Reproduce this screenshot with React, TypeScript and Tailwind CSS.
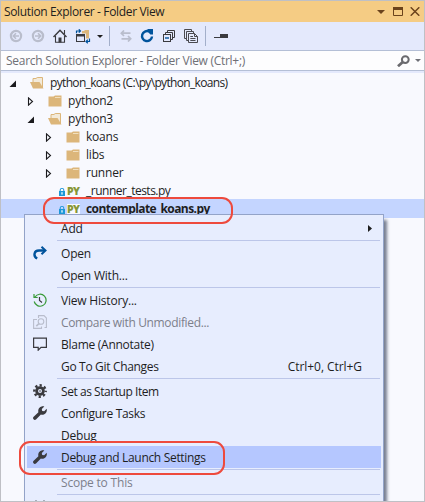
import type { ReactNode } from 'react';

const Back = ({ flip = false }: { flip?: boolean }) => (
  <svg viewBox="0 0 14 14" className={flip ? 'size-[14px] -scale-x-100' : 'size-[14px]'}>
    <circle cx="7" cy="7" r="5.1" fill="none" stroke="#b9bdcc" strokeWidth="2.2" />
    <path d="M10 7H4.5M7 4.3L4.3 7L7 9.7" fill="none" stroke="#b9bdcc" strokeWidth="1.6" />
  </svg>
);

const Home = () => (
  <svg viewBox="0 0 14 14" className="size-[14px]" fill="none" stroke="#3a3a3f">
    <path d="M0.5 8L7 1.3L13.5 8" strokeWidth="1.5" />
    <path d="M2.5 7V13.3H11.5V7M11.5 1V5" strokeWidth="1.1" />
    <path d="M5.5 13.5V8.5H8.5V13.5Z" fill="#3a3a3f" stroke="none" />
  </svg>
);

const SyncView = () => (
  <svg viewBox="0 0 16 15" className="h-[15px] w-4">
    <path d="M7 2H9L10 1H14V9.5H7Z" fill="#dcb67a" />
    <rect x="0" y="4.5" width="11" height="9.5" fill="#e4e9fc" />
    <rect x="1.5" y="5.5" width="8" height="7" fill="#e4e9fc" stroke="#3a3a3f" />
    <rect x="1" y="5" width="9" height="2.5" fill="#3a3a3f" />
    <path d="M1.5 4.2V2H5M3.8 0.3L5.5 2L3.8 3.7M14.5 9.5V12.5H11.3M12.8 10.8L11 12.5L12.8 14.2" fill="none" stroke="#00539c" strokeWidth="1.2" />
  </svg>
);

const Swap = () => (
  <svg viewBox="0 0 12 12" className="size-3" fill="none" stroke="#b9bdcc" strokeWidth="1.7">
    <path d="M1 3.2H10.5M4 0.5L1.3 3.2L4 6M1.5 8.8H11M8 6L10.7 8.8L8 11.5" />
  </svg>
);

const Refresh = () => (
  <svg viewBox="0 0 14 14" className="size-[14px]">
    <path d="M9 2.5A5 5 0 1 0 12 7.5" fill="none" stroke="#00539c" strokeWidth="2.4" />
    <path d="M7.5 0H13V5.6H10.4L7.5 2.6Z" fill="#00539c" />
  </svg>
);

const Collapse = () => (
  <svg viewBox="0 0 12 12" className="size-3" fill="none" stroke="#3a3a3f">
    <path d="M4.5 2.5V0.5H11.5V7.5H9.5M2.5 4.5V2.5H9.5V9.5H7.5" />
    <rect x="0.5" y="4.5" width="7" height="7" />
    <path d="M2 8H6" stroke="#00539c" strokeWidth="1.4" />
  </svg>
);

const ShowAll = () => (
  <svg viewBox="0 0 14 14" className="size-[14px]" fill="none" stroke="#4a4a50" strokeWidth="1">
    <path d="M2.5 9.5H0.5V0.5H7.5V2" />
    <path d="M4.5 11.5H2.5V2.5H9.5V4" />
    <path d="M4.5 4.5H10.5L13.5 7.5V13.5H4.5ZM10.5 4.5V7.5H13.5M6.3 7.5H9M6.3 9.5H11.5M6.3 11.5H11.5" />
  </svg>
);

const Magnifier = () => (
  <svg viewBox="0 0 13 12" className="h-3 w-[13px]" fill="none" stroke="#6a6a6e">
    <circle cx="8.3" cy="4.6" r="3.4" strokeWidth="2" />
    <path d="M5.8 7L1 11.2" strokeWidth="2.8" />
  </svg>
);

const Caret = ({ className }: { className: string }) => (
  <svg viewBox="0 0 8 4" className={className}>
    <path d="M0 0H8L4 4Z" fill="currentColor" />
  </svg>
);

const Folder = ({ open }: { open?: boolean }) =>
  open ? (
    <svg viewBox="0 0 14 12" className="h-3 w-[14px] shrink-0">
      <path d="M3 5V1.5H6L7.2 0.5H12.5V11" fill="#f3ead9" stroke="#dcb67a" />
      <path d="M0 5H9.5L13.5 11.5H3Z" fill="#dcb67a" />
    </svg>
  ) : (
    <svg viewBox="0 0 14 12" className="h-3 w-[14px] shrink-0">
      <path d="M0.5 1.5H5.5L7 0.5H13.5V11.5H0.5Z" fill="#dcb67a" />
      <path d="M7 2.5H12.5" stroke="#f3e3c5" strokeWidth="0.9" />
    </svg>
  );

const Arrow = ({ open }: { open?: boolean }) => (
  <svg viewBox="0 0 7 9" className="h-[9px] w-[7px] shrink-0">
    {open ? <path d="M7 1.5V8H0.5Z" fill="#1b1b1e" /> : <path d="M1.5 0.9L5.5 4.5L1.5 8.1Z" fill="none" stroke="#1b1b1e" strokeWidth="1.1" />}
  </svg>
);

const PyFile = () => (
  <span className="flex shrink-0 items-center">
    <svg viewBox="0 0 6 8" className="mt-[2px] h-[8px] w-[6px]">
      <path d="M1.2 3.5V2A1.8 1.8 0 0 1 4.8 2V3.5" fill="none" stroke="#1c97d8" />
      <rect y="3" width="6" height="5" fill="#1c97d8" />
      <rect x="2.4" y="4.2" width="1.2" height="2.4" fill="#fff" />
    </svg>
    <span className="ml-[2px] w-[13px] bg-[#f8f9fe] text-[10.5px] leading-[10px] font-extrabold tracking-[-0.6px] text-[#879636]">PY</span>
  </span>
);

type NodeProps = { label: string; pad: string; font?: string; kind: 'open' | 'closed' | 'file'; selected?: boolean };

const TreeRow = ({ label, pad, font = '', kind, selected }: NodeProps) => (
  <div className={`flex h-[18px] items-center whitespace-nowrap ${pad} ${selected ? 'bg-[#c4d5ff] shadow-[0_-1px_0_#c4d5ff]' : ''}`}>
    {kind === 'file' ? (
      <PyFile />
    ) : (
      <>
        <Arrow open={kind === 'open'} />
        <span className="ml-[14px] flex">
          <Folder open={kind === 'open'} />
        </span>
      </>
    )}
    <span className={`ml-[6px] ${font}`}>{label}</span>
  </div>
);

const OpenIcon = () => (
  <svg viewBox="0 0 14 14" className="size-[14px]" fill="none" stroke="#00539c">
    <path d="M4.2 12.5C0 10.2 0.8 4.5 6 4.5H11.5" strokeWidth="2.4" />
    <path d="M8.5 0.8L12.5 4.5L8.5 8.3" strokeWidth="2" />
  </svg>
);

const History = () => (
  <svg viewBox="0 0 14 14" className="size-[14px]" fill="none">
    <path d="M2 4A6 6 0 1 1 1.2 8.5M1 1V4.5H4.7" stroke="#389a38" strokeWidth="1.2" />
    <path d="M6.5 4V7.5L9 9.5" stroke="#3a3a3f" strokeWidth="1.2" />
  </svg>
);

const Compare = () => (
  <svg viewBox="0 0 14 14" className="size-[14px]" fill="none" stroke="#b9bdcc" strokeWidth="1.1">
    <path d="M5.5 3V0.6H11L13.4 3V12.5H11.5M4 4.5H0.6V13.4H8.5V11.5" />
    <circle cx="8" cy="6.5" r="2.8" />
    <path d="M6 8.5L3.3 11.2" strokeWidth="1.7" />
  </svg>
);

const Speech = () => (
  <svg viewBox="0 0 14 14" className="size-[14px]" fill="none" stroke="#3a3a3f" strokeWidth="1.2">
    <path d="M0.6 1.1H13.4V10.4H8L5.2 13.2V10.4H0.6Z" />
  </svg>
);

const Gear = () => (
  <svg viewBox="0 0 14 14" className="size-[14px]" fill="none" stroke="#3a3a3f">
    <circle cx="7" cy="7" r="3.4" strokeWidth="2.8" />
    <circle cx="7" cy="7" r="5.7" strokeWidth="2.4" strokeDasharray="2.24 2.24" strokeDashoffset="1.12" />
    <circle cx="7" cy="7" r="0.8" fill="#3a3a3f" stroke="none" />
  </svg>
);

const Wrench = () => (
  <svg viewBox="0 0 14 14" className="size-[14px]">
    <path d="M0.4 11L5.4 6.3C4.6 3 7 -0.3 11.3 0.4L8.8 2.9L9.2 4.9L11.2 5.3L13.7 2.7C14.6 6.8 11 9.7 7.9 8.6L3 13.6C1 14.7 -0.7 12.7 0.4 11Z" fill="#3a3a3f" />
  </svg>
);

const Tips = () => (
  <svg viewBox="0 0 14 14" className="size-[14px]" fill="none" stroke="#3a3a3f" strokeWidth="1.4">
    <path d="M3 0.5V7M11 0.5V7" />
  </svg>
);

type ItemProps = { label: string; icon?: ReactNode; muted?: boolean; active?: boolean; font?: string; children?: ReactNode };

const Item = ({ label, icon, muted, active, font = '', children }: ItemProps) => (
  <div className={`mx-[2px] flex h-[22px] shrink-0 items-center pt-px pl-[6px] whitespace-nowrap ${active ? 'bg-[#b5c7ff]' : ''} ${muted ? 'text-[#7d808b]' : ''}`}>
    <span className="-mt-px flex w-[28px] shrink-0">{icon}</span>
    <span className={`pt-px ${font}`}>{label}</span>
    {children}
  </div>
);

const Sep = () => <div className="mr-[3px] ml-[32px] h-[3px] shrink-0 border-b border-transparent bg-[#bcc6e9] bg-clip-content pt-px" />;

export default function App() {
  return (
    <div className="relative flex h-[502px] w-[425px] flex-col overflow-hidden border border-[#bfc0c5] bg-[#f8f9fe] font-['Open_Sans','Noto_Sans',sans-serif] text-[12px] leading-[18px] tracking-[-0.2px] text-[#1e1e1e]">
      <header className="flex h-[21px] shrink-0 items-center bg-[#f5cc84] pl-[3px]">
        <h1 className="tracking-[-0.35px]">Solution Explorer - Folder View</h1>
        <span className="mr-[4px] ml-auto flex items-center text-[#6b431c]">
          <Caret className="h-1 w-2" />
          <svg viewBox="0 0 10 9" className="ml-[8px] h-[9px] w-[10px]">
            <path d="M0.5 0.5H9.5V8.5H0.5Z" fill="none" stroke="currentColor" />
            <path d="M0 0H10V3H0Z" fill="currentColor" />
          </svg>
          <svg viewBox="0 0 10 9" className="ml-[7px] h-[9px] w-[10px]">
            <path d="M0.7 0.3L9.3 8.7M9.3 0.3L0.7 8.7" stroke="currentColor" strokeWidth="1.5" />
          </svg>
        </span>
      </header>
      <nav className="flex h-[28px] shrink-0 items-center bg-[#e4e9fc] pl-[8px]">
        <Back />
        <span className="ml-[8px] flex"><Back flip /></span>
        <span className="ml-[8px] flex"><Home /></span>
        <span className="ml-[8px] flex"><SyncView /></span>
        <Caret className="ml-[6px] h-[3px] w-[6px] text-[#1e1e1e]" />
        <span className="ml-[6px] h-[20px] w-px bg-[#a3afca]" />
        <span className="ml-[10px] flex"><Swap /></span>
        <span className="ml-[8px] flex"><Refresh /></span>
        <span className="ml-[9px] flex"><Collapse /></span>
        <span className="ml-[9px] flex"><ShowAll /></span>
        <span className="ml-[7px] h-[20px] w-px bg-[#a3afca]" />
        <svg viewBox="0 0 14 5" className="ml-[8px] h-[5px] w-[14px]">
          <path d="M0 4V3H6V0H14V4Z" fill="#3a3a3f" />
        </svg>
      </nav>
      <div className="flex h-[21px] shrink-0 items-center border-y border-[#b4bfd6] bg-[#fdfdfe] pr-[3px] pl-[5px] text-[#6f7076]">
        <span className="tracking-[-0.28px] whitespace-nowrap">Search Solution Explorer - Folder View (Ctrl+;)</span>
        <span className="ml-auto flex"><Magnifier /></span>
        <Caret className="ml-[5px] h-[3px] w-[6px]" />
      </div>
      <div className="mb-px h-[2px] shrink-0 bg-[#e4e9fc]" />
      <main className="flex flex-col">
        <TreeRow label="python_koans (C:\py\python_koans)" kind="open" pad="pl-[8px]" font="tracking-[-0.66px]" />
        <TreeRow label="python2" kind="closed" pad="pl-[26px]" />
        <TreeRow label="python3" kind="open" pad="pl-[26px]" />
        <TreeRow label="koans" kind="closed" pad="pl-[44px]" />
        <TreeRow label="libs" kind="closed" pad="pl-[44px]" />
        <TreeRow label="runner" kind="closed" pad="pl-[44px]" />
        <TreeRow label="_runner_tests.py" kind="file" pad="pl-[58px]" font="tracking-[-0.5px]" />
        <TreeRow label="contemplate_koans.py" kind="file" pad="pl-[58px]" font="font-bold tracking-[-0.57px]" selected />
      </main>
      <div className="absolute top-[213px] left-[23px] flex h-[300px] w-[360px] flex-col border border-[#93a3c8] bg-[#e7edfe] pt-[2px] shadow-[3px_6px_3px_#777e90]">
        <Item label="Add">
          <svg viewBox="0 0 4 7" className="mr-[9px] ml-auto h-[7px] w-[4px]"><path d="M0 0L4 3.5L0 7Z" fill="#1e1e1e" /></svg>
        </Item>
        <Sep />
        <Item label="Open" icon={<OpenIcon />} />
        <Item label="Open With..." />
        <Sep />
        <Item label="View History..." icon={<History />} />
        <Item label="Compare with Unmodified..." icon={<Compare />} muted font="tracking-[-0.35px]" />
        <Item label="Blame (Annotate)" icon={<Speech />} font="tracking-[-0.27px]" />
        <Item label="Go To Git Changes" font="tracking-[-0.32px]"><span className="mr-[19px] ml-auto pt-px tracking-[-0.06px]">Ctrl+0, Ctrl+G</span></Item>
        <Sep />
        <Item label="Set as Startup Item" icon={<Gear />} font="tracking-[-0.45px]" />
        <Item label="Configure Tasks" icon={<Wrench />} font="tracking-[-0.32px]" />
        <Item label="Debug" font="mb-[3px] h-[16px] overflow-hidden" />
        <Item label="Debug and Launch Settings" icon={<Wrench />} active font="tracking-[-0.32px]" />
        <Sep />
        <Item label="Scope to This" muted />
        <Sep />
        <Item label="" icon={<Tips />} />
      </div>
      <div className="absolute top-[196px] left-[42px] h-[27px] w-[190px] rounded-[11px] border-2 border-[#ee4a3d]" />
      <div className="absolute top-[440px] left-[18px] h-[34px] w-[206px] rounded-[11px] border-2 border-[#ee4a3d]" />
    </div>
  );
}
